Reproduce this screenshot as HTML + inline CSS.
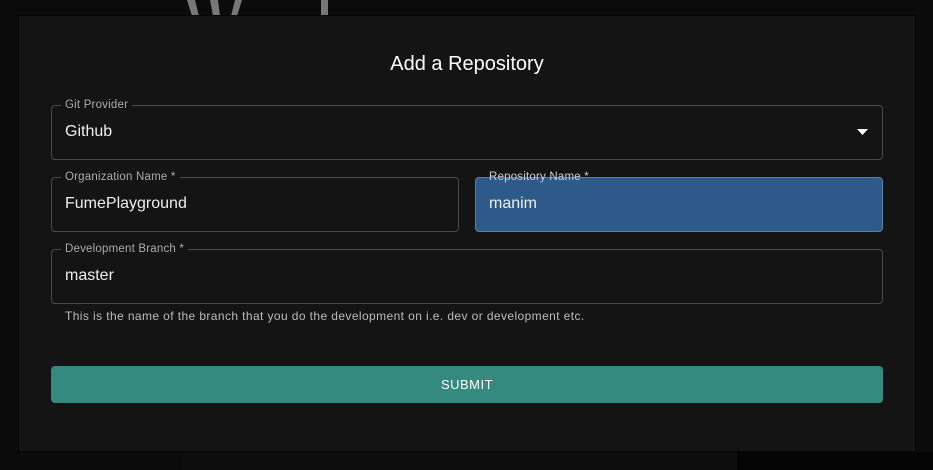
<!DOCTYPE html>
<html><head><meta charset="utf-8"><style>
*{box-sizing:border-box;margin:0;padding:0}
body{width:933px;height:470px;background:#0b0b0b;position:relative;overflow:hidden;font-family:"Liberation Sans",sans-serif;color:#fff}
.abs{position:absolute}
.dlg{left:18px;top:15px;width:898px;height:437px;background:#141414;border:1px solid #050505}
.f{position:absolute;border:1px solid #4a4a4a;border-radius:4px}
.lbl{position:absolute;top:-8px;left:9px;padding:0 4px;font-size:11.5px;letter-spacing:0.2px;color:#aaa;background:#141414;line-height:14px}
.val{position:absolute;left:13px;top:17px;font-size:16px;color:#eee}
</style></head><body>
<div class="abs" style="left:183px;top:452px;width:554px;height:18px;background:#0d0d0d"></div>
<div class="abs" style="left:737px;top:452px;width:196px;height:18px;background:#050505"></div>
<svg class="abs" style="left:180px;top:0" width="160" height="16"><g fill="#777"><polygon points="7,0 15,0 19,16 12,16"/><polygon points="30,0 38,0 40,16 33,16"/><polygon points="55,0 62,0 57,16 51,16"/></g><rect x="141" y="0" width="7" height="16" fill="#777"/></svg>
<div class="abs dlg"></div>
<div class="abs" style="left:18px;top:53px;width:898px;text-align:center;font-size:20px;color:#fff">Add a Repository</div>
<div class="f" style="left:51px;top:105px;width:832px;height:55px"><span class="lbl">Git Provider</span><span class="val">Github</span>
<svg class="abs" style="left:805px;top:22px" width="12" height="8"><polygon points="0,1 11,1 5.5,7" fill="#fff"/></svg></div>
<div class="f" style="left:51px;top:177px;width:408px;height:55px"><span class="lbl">Organization Name *</span><span class="val">FumePlayground</span></div>
<div class="f" style="left:475px;top:177px;width:408px;height:55px;background:#2e5a8a;border-color:#5a7fa8"><span class="lbl" style="background:transparent;color:#ccd">Repository Name *</span><span class="val">manim</span></div>
<div class="f" style="left:51px;top:249px;width:832px;height:55px"><span class="lbl">Development Branch *</span><span class="val">master</span></div>
<div class="abs" style="left:65px;top:309px;font-size:12px;letter-spacing:0.4px;color:#bbb">This is the name of the branch that you do the development on i.e. dev or development etc.</div>
<div class="abs" style="left:51px;top:366px;width:832px;height:37px;background:#348a7e;border-radius:4px;text-align:center;line-height:37px;font-size:13px;font-weight:500;letter-spacing:0.5px;color:#fff">SUBMIT</div>
</body></html>
